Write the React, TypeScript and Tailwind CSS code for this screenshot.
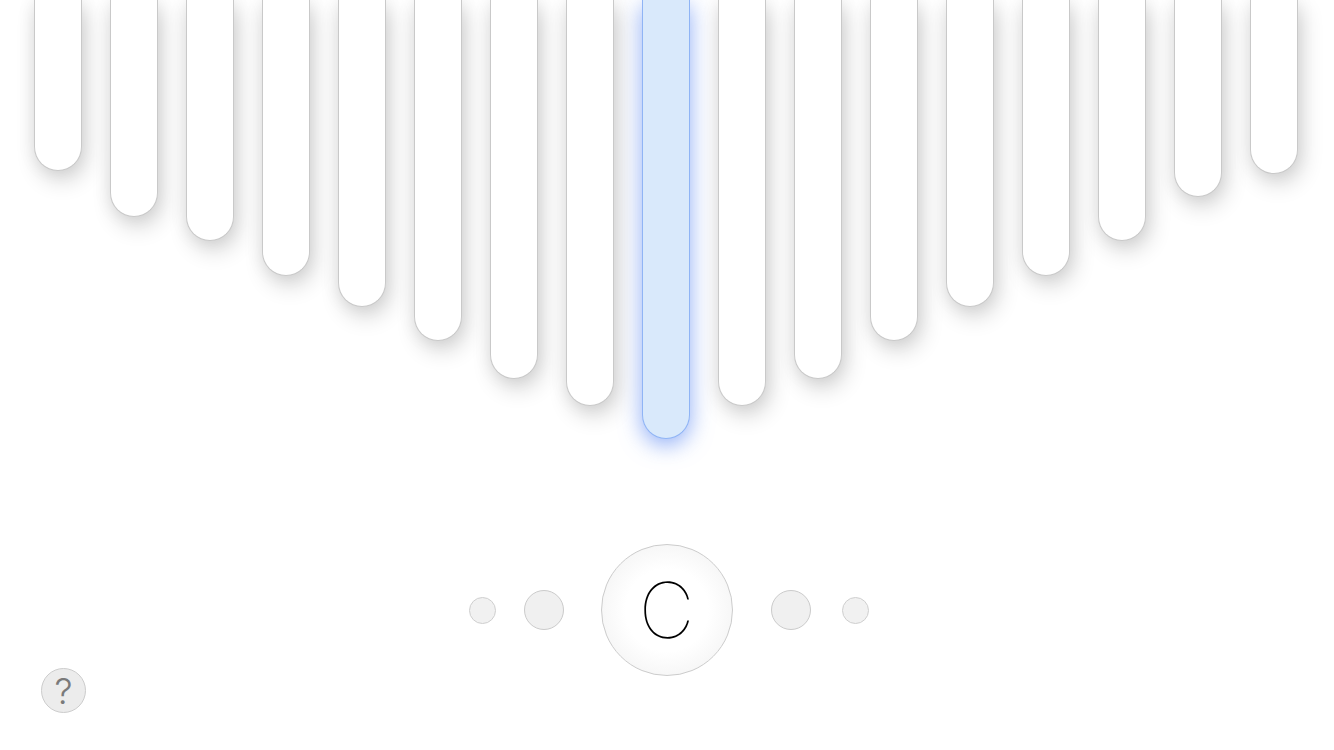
import React from "react";

const tines = [
  { h: "h-[171px]" },
  { h: "h-[217px]" },
  { h: "h-[241px]" },
  { h: "h-[276px]" },
  { h: "h-[307px]" },
  { h: "h-[341px]" },
  { h: "h-[379px]" },
  { h: "h-[406px]" },
  { h: "h-[439px]", active: true },
  { h: "h-[406px]" },
  { h: "h-[379px]" },
  { h: "h-[341px]" },
  { h: "h-[307px]" },
  { h: "h-[276px]" },
  { h: "h-[241px]" },
  { h: "h-[197px]" },
  { h: "h-[174px]" },
];

export default function App() {
  return (
    <div
      className="relative h-[750px] w-[1334px] overflow-hidden bg-white"
      style={{ fontFamily: "Inter, 'Noto Sans', sans-serif" }}
    >
      {/* tines */}
      <div className="flex items-start gap-[28px] pl-[34px]">
        {tines.map((t, i) =>
          t.active ? (
            <div
              key={i}
              className={`${t.h} w-[48px] shrink-0 rounded-b-[24px] border border-t-0 border-[#8fb4f5] bg-[#d9e9fb] shadow-[0_6px_22px_rgba(70,120,240,0.6)]`}
            />
          ) : (
            <div
              key={i}
              className={`${t.h} w-[48px] shrink-0 rounded-b-[24px] border border-t-0 border-[#c9c9c9] bg-white shadow-[4px_10px_22px_rgba(0,0,0,0.16),0_0_18px_rgba(0,0,0,0.08)]`}
            />
          )
        )}
      </div>

      {/* note selector */}
      <div className="mt-[105px] flex items-center justify-center pl-[3px]">
        <div className="h-[27px] w-[27px] rounded-full border border-[#cfcfcf] bg-[#f1f1f1]" />
        <div className="ml-[28px] h-[40px] w-[40px] rounded-full border border-[#cbcbcb] bg-[#f0f0f0]" />
        <div className="ml-[37px] flex h-[132px] w-[132px] items-center justify-center rounded-full border border-[#cccccc] bg-[radial-gradient(circle,#ffffff_45%,#eeeeee_100%)]">
          <span className="text-[77px] leading-none font-thin text-black">C</span>
        </div>
        <div className="ml-[38px] h-[40px] w-[40px] rounded-full border border-[#cbcbcb] bg-[#f0f0f0]" />
        <div className="ml-[31px] h-[27px] w-[27px] rounded-full border border-[#cfcfcf] bg-[#f1f1f1]" />
      </div>

      {/* help */}
      <button className="absolute left-[41px] top-[668px] flex h-[45px] w-[45px] items-center justify-center rounded-full border border-[#cccccc] bg-[#ececec] text-[36px] leading-none font-light text-[#7a7a7a]">
        ?
      </button>
    </div>
  );
}
